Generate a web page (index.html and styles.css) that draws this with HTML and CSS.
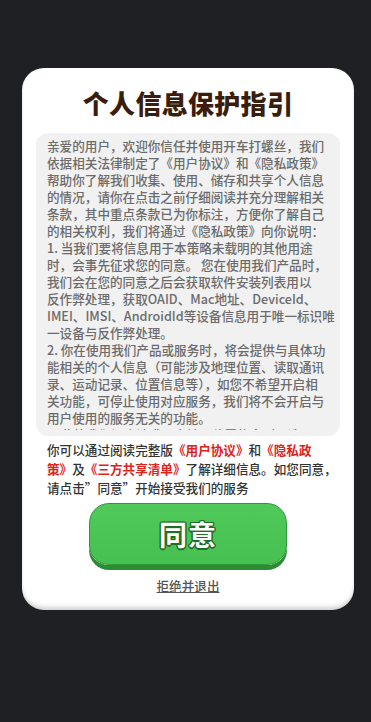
FILE: index.html
```html
<!DOCTYPE html>
<html lang="zh-CN">
<head>
<meta charset="utf-8">
<title>个人信息保护指引</title>
<link rel="stylesheet" href="styles.css">
</head>
<body>
<div class="card">
  <h1 class="title">个人信息保护指引</h1>
  <div class="policy-box">
    <div class="policy-scroll">
      亲爱的用户，欢迎你信任并使用开车打螺丝，我们<br>
      依据相关法律制定了《用户协议》和《隐私政策》<br>
      帮助你了解我们收集、使用、储存和共享个人信息<br>
      的情况，请你在点击之前仔细阅读并充分理解相关<br>
      条款，其中重点条款已为你标注，方便你了解自己<br>
      的相关权利，我们将通过《隐私政策》向你说明：<br>
      1. 当我们要将信息用于本策略未载明的其他用途<br>
      时，会事先征求您的同意。 您在使用我们产品时，<br>
      我们会在您的同意之后会获取软件安装列表用以<br>
      反作弊处理，获取OAID、Mac地址、DeviceId、<br>
      IMEI、IMSI、AndroidId等设备信息用于唯一标识唯<br>
      一设备与反作弊处理。<br>
      2. 你在使用我们产品或服务时，将会提供与具体功<br>
      能相关的个人信息（可能涉及地理位置、读取通讯<br>
      录、运动记录、位置信息等），如您不希望开启相<br>
      关功能，可停止使用对应服务，我们将不会开启与<br>
      用户使用的服务无关的功能。<br>
      3. 此外我们还会请求用户地理位置信息（可选，不
    </div>
  </div>
  <p class="notice">你可以通过阅读完整版<span class="link">《用户协议》</span>和<span class="link">《隐私政</span><br><span class="link">策》</span>及<span class="link">《三方共享清单》</span>了解详细信息。如您同意，<br>请点击”同意”开始接受我们的服务</p>
  <button class="agree-btn">同意</button>
  <a class="refuse" href="#">拒绝并退出</a>
</div>
</body>
</html>
```

FILE: styles.css
```css
html, body {
  margin: 0;
  padding: 0;
}
body {
  background: #1f2024;
  width: 371px;
  height: 722px;
  overflow: hidden;
  font-family: "Noto Sans CJK SC", "Noto Sans", sans-serif;
}
.card {
  box-sizing: border-box;
  width: 332px;
  margin: 68px 0 0 22px;
  background: #ffffff;
  border-radius: 22px;
  padding: 18px 14px 15px;
  box-shadow: inset 0 -4px 4px -1px rgba(0, 0, 0, 0.18);
  display: flex;
  flex-direction: column;
}
.title {
  margin: 0 0 13px;
  font-size: 26px;
  line-height: 34px;
  font-weight: 900;
  color: #3a1d0d;
  text-align: center;
  letter-spacing: 0.3px;
}
.policy-box {
  background: #f1f1f1;
  border-radius: 12px;
  padding: 4px 4px 6px 11px;
}
.policy-scroll {
  height: 293px;
  overflow: hidden;
  font-size: 12.6px;
  line-height: 17px;
  font-weight: 500;
  color: #6b6b6b;
  white-space: nowrap;
}
.notice {
  margin: 4px 0 0;
  padding-left: 11px;
  font-size: 12.6px;
  line-height: 19px;
  font-weight: 500;
  color: #333333;
  white-space: nowrap;
}
.link {
  color: #e0231a;
  font-weight: 700;
}
.agree-btn {
  align-self: center;
  width: 198px;
  height: 62px;
  margin: 6px 0 5px;
  border: 1.5px solid #2f9838;
  border-radius: 20px;
  background: linear-gradient(#50c95b, #47c052);
  box-shadow: 0 5px 0 #2b8c33;
  color: #ffffff;
  font-family: "Noto Sans CJK SC", sans-serif;
  font-size: 28px;
  font-weight: 700;
  letter-spacing: 1px;
  text-shadow:
    1.5px 0 0 #1f6e27, -1.5px 0 0 #1f6e27, 0 1.5px 0 #1f6e27, 0 -1.5px 0 #1f6e27,
    1px 1px 0 #1f6e27, -1px -1px 0 #1f6e27, 1px -1px 0 #1f6e27, -1px 1px 0 #1f6e27;
  padding: 0;
}
.refuse {
  align-self: center;
  margin-top: 7px;
  font-size: 12.6px;
  line-height: 18px;
  font-weight: 500;
  color: #555555;
  text-decoration: underline;
}
```
